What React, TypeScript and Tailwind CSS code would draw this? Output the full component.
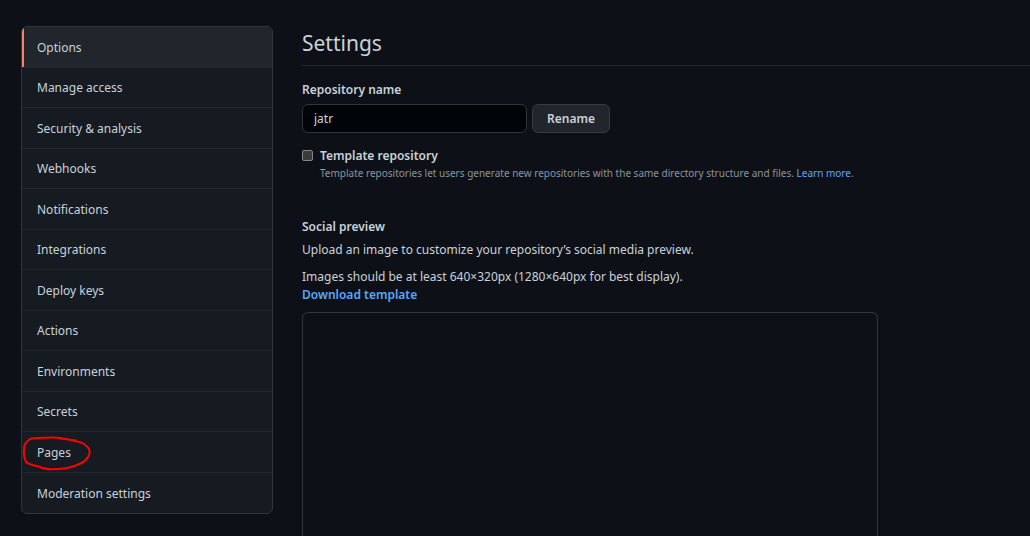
const sections = [
  "Options",
  "Manage access",
  "Security & analysis",
  "Webhooks",
  "Notifications",
  "Integrations",
  "Deploy keys",
  "Actions",
  "Environments",
  "Secrets",
  "Pages",
  "Moderation settings",
];

function HandDrawnCircle() {
  return (
    <svg
      className="pointer-events-none absolute left-0 top-0 overflow-visible"
      width="70"
      height="42"
      viewBox="0 -1 70 42"
      fill="none"
      stroke="#ff0000"
      strokeWidth="2"
      strokeLinecap="round"
      strokeLinejoin="round"
      aria-hidden="true"
    >
      <path d="M54 7.500 L46 6.500 C40 5 34 4 28 4.500 C20 5 12 5 8 6 C5 8 2 11 2 15 C1.500 20 2 25 4 29 C7 32 12 32 18 34 C24 37 38 36 45 35 C54 33 63 30 66 24 C69 20 68 15 63 12 C61 9 56 9 49 7 C45 6 42 6 38 5.500" />
    </svg>
  );
}

function SettingsMenu() {
  return (
    <nav
      aria-label="Settings"
      className="grid min-h-[488px] w-[252px] shrink-0 auto-rows-fr self-start overflow-hidden rounded-md border border-[#30363d] bg-[#161b22]"
    >
      {sections.map((name, i) => (
        <a
          key={name}
          href="#"
          aria-current={i === 0 ? "page" : undefined}
          className={
            "relative flex items-center border-b border-[#21262d] px-[15px] pt-0.5 last:border-b-0 " +
            (i === 0 ? "bg-[#21262d]" : "")
          }
        >
          {i === 0 && <span className="absolute inset-y-0 left-0 w-0.5 bg-[#f78166]" />}
          {name}
          {name === "Pages" && <HandDrawnCircle />}
        </a>
      ))}
    </nav>
  );
}

export default function App() {
  return (
    <div className="flex h-screen gap-[29px] overflow-hidden bg-[#0d1117] pl-[21px] pt-[26px] font-['Noto_Sans',sans-serif] text-[12px] leading-[18px] text-[#c9d1d9]">
      <SettingsMenu />
      <main className="flex min-w-0 flex-1 flex-col">
        <h1 className="border-b border-[#21262d] pb-2 pt-1 text-[21px] leading-[27px]">Settings</h1>

        <form className="mt-[15px]" onSubmit={(e) => e.preventDefault()}>
          <label htmlFor="repo-name" className="block font-semibold">
            Repository name
          </label>
          <div className="mt-[5px] flex gap-[5px]">
            <input
              id="repo-name"
              defaultValue="jatr"
              className="h-[29px] w-[225px] rounded-md border border-[#30363d] bg-[#010409] px-[11px] outline-none"
            />
            <button
              type="submit"
              className="h-[29px] rounded-md border border-[#363b42] bg-[#21262d] px-[14px] font-semibold"
            >
              Rename
            </button>
          </div>
          <div className="mt-[14px] flex gap-[7px]">
            <input
              id="template"
              type="checkbox"
              className="mt-[3px] size-[11px] shrink-0 appearance-none rounded-[2px] border border-[#858585] bg-[#3b3b3b]"
            />
            <div>
              <label htmlFor="template" className="block font-semibold">
                Template repository
              </label>
              <p className="text-[10px] leading-4 text-[#8b949e]">
                Template repositories let users generate new repositories with the same directory
                structure and files.{" "}
                <a href="#" className="text-[#58a6ff]">
                  Learn more
                </a>
                .
              </p>
            </div>
          </div>
        </form>

        <section className="mt-[37px] flex min-h-0 flex-1 flex-col">
          <h2 className="font-semibold">Social preview</h2>
          <p className="mt-[5px]">
            Upload an image to customize your repository’s social media preview.
          </p>
          <p className="mt-[9px]">
            Images should be at least 640×320px (1280×640px for best display).
            <br />
            <a href="#" className="font-semibold text-[#58a6ff]">
              Download template
            </a>
          </p>
          <div className="mt-2 w-full max-w-[576px] flex-1 rounded-t-md border border-b-0 border-[#30363d]" />
        </section>
      </main>
    </div>
  );
}
